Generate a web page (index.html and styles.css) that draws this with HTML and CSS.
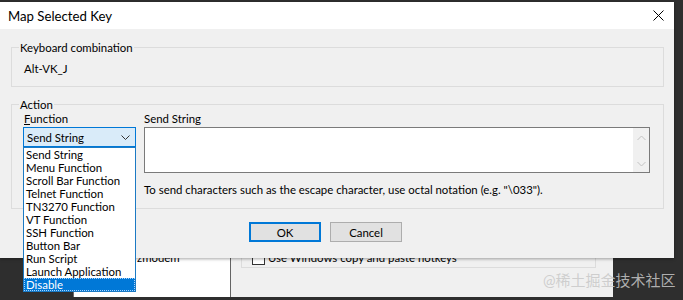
FILE: index.html
```html
<!DOCTYPE html>
<html lang="en">
<head>
    <meta charset="UTF-8">
    <title>Map Selected Key</title>
    <link rel="stylesheet" href="styles.css">
</head>
<body>
    <div class="desk">
        <div class="dialog">
            <div class="titlebar">
                <span class="title">Map Selected Key</span>
                <svg class="close" width="11" height="11" viewBox="0 0 11 11">
                    <path d="M0.5 0.5 L10.5 10.5 M10.5 0.5 L0.5 10.5" stroke="#000" stroke-width="1" fill="none"/>
                </svg>
            </div>
            <div class="content">
                <div class="group keyboard">
                    <div class="legend">Keyboard combination</div>
                    <div class="combo-value">Alt-VK_J</div>
                </div>

                <div class="group action">
                    <div class="legend">Action</div>
                    <div class="action-row">
                        <div class="func-col">
                            <div class="label"><u>F</u>unction</div>
                            <div class="combo">
                                <span>Send String</span>
                                <svg width="9" height="6" viewBox="0 0 9 6">
                                    <path d="M0.5 0.5 L4.5 4.5 L8.5 0.5" stroke="#333" stroke-width="1" fill="none"/>
                                </svg>
                                <div class="droplist">
                                    <div class="item">Send String</div>
                                    <div class="item">Menu Function</div>
                                    <div class="item">Scroll Bar Function</div>
                                    <div class="item">Telnet Function</div>
                                    <div class="item">TN3270 Function</div>
                                    <div class="item">VT Function</div>
                                    <div class="item">SSH Function</div>
                                    <div class="item">Button Bar</div>
                                    <div class="item">Run Script</div>
                                    <div class="item">Launch Application</div>
                                    <div class="item selected">Disable</div>
                                </div>
                            </div>
                        </div>
                        <div class="send-col">
                            <div class="label">Send String</div>
                            <div class="textbox">
                                <div class="text-area"></div>
                                <div class="vscroll">
                                    <svg width="9" height="6" viewBox="0 0 9 6">
                                        <path d="M0.5 5 L4.5 1 L8.5 5" stroke="#c2c2c2" stroke-width="1" fill="none"/>
                                    </svg>
                                    <svg width="9" height="6" viewBox="0 0 9 6">
                                        <path d="M0.5 1 L4.5 5 L8.5 1" stroke="#c2c2c2" stroke-width="1" fill="none"/>
                                    </svg>
                                </div>
                            </div>
                            <div class="hint">To send characters such as the escape character, use octal notation (e.g. "\033").</div>
                        </div>
                    </div>
                </div>

                <div class="buttons">
                    <button class="btn default">OK</button>
                    <button class="btn">Cancel</button>
                </div>
            </div>
        </div>

        <!-- window behind the dialog -->
        <div class="behind">
            <div class="bg-dark"></div>
            <div class="bg-white">
                <div class="bg-text">zmodem</div>
            </div>
            <div class="bg-grey">
                <div class="bg-group">
                    <div class="bg-check">
                        <span class="checkbox"></span>
                        <span>Use Windows copy and paste hotkeys</span>
                    </div>
                </div>
            </div>
        </div>

        <div class="watermark">@稀土掘金技术社区</div>
    </div>
</body>
</html>
```

FILE: styles.css
```css
body {
    margin: 0;
    background-color: #2e2e2e;
    font-family: Lato, "Liberation Sans", "Noto Sans CJK SC", sans-serif;
    font-size: 11.4px;
    color: #000;
}
.desk {
    position: relative;
    width: 683px;
    height: 300px;
    padding-top: 2px;
    box-sizing: border-box;
    overflow: hidden;
    background-color: #2e2e2e;
}
.dialog {
    width: 674px;
    height: 256px;
    background-color: #f0f0f0;
    position: relative;
    z-index: 2;
    box-shadow: 0 1px 3px rgba(0, 0, 0, 0.35);
}
.titlebar {
    height: 27px;
    background-color: #fff;
    display: flex;
    align-items: center;
    justify-content: space-between;
    padding: 0 10px 0 8px;
}
.title {
    font-size: 13.2px;
}
.close {
    margin-top: -1px;
}
.content {
    padding: 0 10px 0 11px;
}
.group {
    border: 1px solid #dcdcdc;
}
.legend {
    width: fit-content;
    background-color: #f0f0f0;
    line-height: 13px;
    padding: 1px 1px 0;
    margin: -8px 0 0 -5px;
}
.keyboard {
    margin-top: 18px;
    padding: 0 12px 10px;
}
.combo-value {
    line-height: 14px;
    padding-top: 1px;
    margin-top: 7px;
}
.action {
    margin-top: 17px;
    padding: 0 13px 12px 12px;
}
.action-row {
    display: flex;
    gap: 8px;
}
.label {
    line-height: 13px;
    padding-top: 1px;
}
.func-col {
    width: 113px;
    margin-left: -1px;
}
.func-col .label {
    padding-left: 1px;
}
.combo {
    position: relative;
    margin-top: 2px;
    height: 20px;
    box-sizing: border-box;
    border: 1px solid #0078d7;
    background-color: #d9ebf9;
    display: flex;
    align-items: center;
    justify-content: space-between;
    padding: 1px 5px 0 3px;
}
.droplist {
    position: absolute;
    top: 19px;
    left: -1px;
    width: 113px;
    box-sizing: border-box;
    border: 1px solid #1c7ac4;
    background-color: #fff;
    z-index: 3;
}
.item {
    height: 13px;
    line-height: 14px;
    padding-left: 2px;
    white-space: nowrap;
}
.item.selected {
    background-color: #0078d7;
    color: #fff;
    outline: 1px dotted #a8d4ff;
    outline-offset: -1px;
}
.send-col {
    flex: 1;
}
.textbox {
    margin-top: 2px;
    height: 46px;
    box-sizing: border-box;
    border: 1px solid #7a7a7a;
    background-color: #fff;
    display: flex;
}
.text-area {
    flex: 1;
}
.vscroll {
    width: 16px;
    background-color: #f0f0f0;
    display: flex;
    flex-direction: column;
    justify-content: space-between;
    align-items: center;
    padding: 7px 0 5px;
}
.hint {
    line-height: 13px;
    padding-top: 1px;
    margin-top: 9px;
    white-space: nowrap;
}
.buttons {
    display: flex;
    gap: 9px;
    margin: 13px 0 0 238px;
}
.btn {
    width: 72px;
    height: 20px;
    box-sizing: border-box;
    border: 1px solid #adadad;
    background-color: #e1e1e1;
    font-family: inherit;
    font-size: 11.4px;
    padding: 1px 0 0;
}
.btn.default {
    border: 2px solid #0078d7;
}
.behind {
    display: flex;
    height: 39px;
}
.bg-dark {
    width: 73px;
}
.bg-white {
    width: 156px;
    background-color: #fff;
    border-left: 1px solid #6a6a6a;
    border-right: 1px solid #646464;
    overflow: hidden;
}
.bg-text {
    margin: -7px 0 0 63px;
    line-height: 14px;
}
.bg-grey {
    width: 382px;
    background-color: #f0f0f0;
    padding-left: 10px;
    box-sizing: border-box;
    overflow: hidden;
}
.bg-group {
    width: 355px;
    height: 10px;
    box-sizing: border-box;
    border: 1px solid #dcdcdc;
    border-top: none;
    overflow: hidden;
}
.bg-check {
    display: flex;
    align-items: center;
    gap: 3px;
    margin-top: -7px;
    padding-left: 10px;
    line-height: 14px;
    white-space: nowrap;
}
.checkbox {
    width: 13px;
    height: 13px;
    box-sizing: border-box;
    border: 1px solid #333;
    background-color: #fff;
}
.watermark {
    position: absolute;
    left: 543px;
    top: 270px;
    font-size: 15px;
    line-height: 20px;
    color: rgba(200, 200, 200, 0.85);
    z-index: 4;
}
```
